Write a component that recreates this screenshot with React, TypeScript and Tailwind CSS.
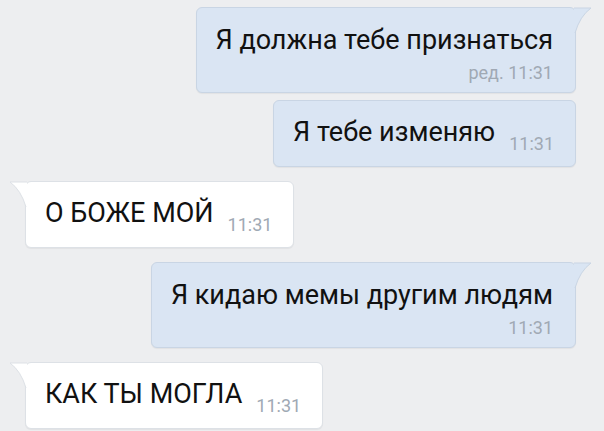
import React from 'react'

type Msg = {
  text: string
  time: string
  out: boolean
  stacked?: boolean
}

const messages: Msg[] = [
  { text: 'Я должна тебе признаться', time: 'ред. 11:31', out: true, stacked: true },
  { text: 'Я тебе изменяю', time: '11:31', out: true },
  { text: 'О БОЖЕ МОЙ', time: '11:31', out: false },
  { text: 'Я кидаю мемы другим людям', time: '11:31', out: true, stacked: true },
  { text: 'КАК ТЫ МОГЛА', time: '11:31', out: false },
]

// little curved corner that hangs off the top of the bubble
const Tail = ({ out }: { out: boolean }) =>
  out ? (
    <svg className="absolute -right-[17px] -top-px" width="18" height="27" viewBox="0 0 18 27">
      <path d="M0 1 H17 Q6 9 1 26 H0 Z" fill="#dae5f3" />
      <path d="M0 1 H17 Q6 9 1 26" fill="none" stroke="#c9d5e4" strokeWidth="1" />
    </svg>
  ) : (
    <svg className="absolute -left-[17px] -top-px" width="18" height="27" viewBox="0 0 18 27">
      <path d="M18 1 H1 Q12 9 17 26 H18 Z" fill="#ffffff" />
      <path d="M18 1 H1 Q12 9 17 26" fill="none" stroke="#dde1e6" strokeWidth="1" />
    </svg>
  )

const Bubble = ({ m }: { m: Msg }) => {
  const bubbleCls = m.out
    ? 'bg-[#dae5f3] border-[#c9d5e4] mr-[28px]'
    : 'bg-white border-[#dde1e6] ml-[25px]'
  return (
    <div className={`flex ${m.out ? 'justify-end' : 'justify-start'}`}>
      <div className={`relative rounded-[6px] border shadow-[0_1px_1px_rgba(0,0,0,0.05)] ${bubbleCls}`}>
        {(m.stacked || !m.out) && <Tail out={m.out} />}
        {m.stacked ? (
          <div className="flex flex-col items-end pl-[19px] pr-[22px] pt-[16px] pb-[8px]">
            <p className="text-[27px] leading-[33px] text-[#111]">{m.text}</p>
            <span className="mt-[5px] text-[18px] leading-[22px] text-[#a0a9b4]">{m.time}</span>
          </div>
        ) : (
          <div className="flex items-end pl-[19px] pr-[21px] pt-[15px] pb-[17px]">
            <p className="text-[27px] leading-[33px] text-[#111]">{m.text}</p>
            <span className="ml-[14px] mb-[-6px] text-[18px] leading-[22px] text-[#a0a9b4]">{m.time}</span>
          </div>
        )}
      </div>
    </div>
  )
}

export default function App() {
  return (
    <main
      className="w-[604px] h-[431px] overflow-hidden bg-[#edeef0] pt-[7px] flex flex-col"
      style={{ fontFamily: 'Roboto, "Liberation Sans", sans-serif' }}
    >
      {messages.map((m, i) => (
        <div key={i} className={i === 0 ? '' : i === 1 ? 'mt-[7px]' : 'mt-[14px]'}>
          <Bubble m={m} />
        </div>
      ))}
    </main>
  )
}
